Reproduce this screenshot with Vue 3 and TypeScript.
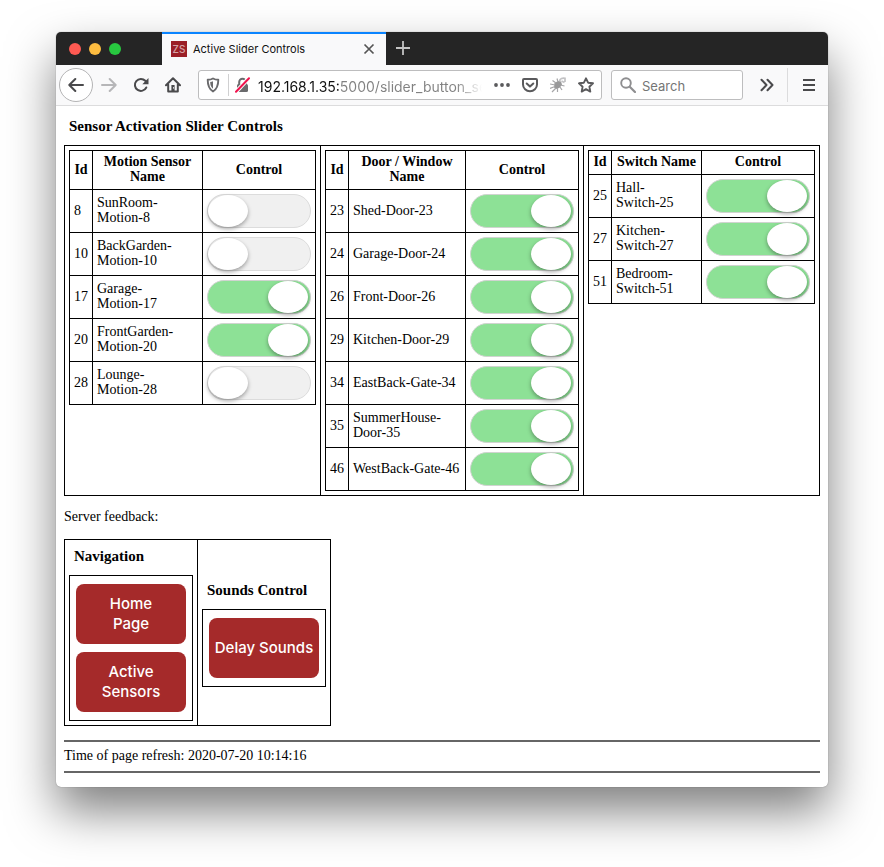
<script setup lang="ts">
import { reactive, ref } from 'vue'

interface Device {
  id: number
  place: string
  kind: string
  on: boolean
}

interface Group {
  key: string
  heading: string
  devices: Device[]
}

const device = (id: number, place: string, kind: string, on: boolean): Device => ({ id, place, kind, on })

const groups = reactive<Group[]>([
  {
    key: 'motion',
    heading: 'Motion Sensor Name',
    devices: [
      device(8, 'SunRoom', 'Motion', false),
      device(10, 'BackGarden', 'Motion', false),
      device(17, 'Garage', 'Motion', true),
      device(20, 'FrontGarden', 'Motion', true),
      device(28, 'Lounge', 'Motion', false),
    ],
  },
  {
    key: 'door',
    heading: 'Door / Window Name',
    devices: [
      device(23, 'Shed', 'Door', true),
      device(24, 'Garage', 'Door', true),
      device(26, 'Front', 'Door', true),
      device(29, 'Kitchen', 'Door', true),
      device(34, 'EastBack', 'Gate', true),
      device(35, 'SummerHouse', 'Door', true),
      device(46, 'WestBack', 'Gate', true),
    ],
  },
  {
    key: 'switch',
    heading: 'Switch Name',
    devices: [
      device(25, 'Hall', 'Switch', true),
      device(27, 'Kitchen', 'Switch', true),
      device(51, 'Bedroom', 'Switch', true),
    ],
  },
])

const address = ref('192.168.1.35:5000/slider_button_sen')
const search = ref('')
const refreshed = '2020-07-20 10:14:16'
</script>

<template>
  <div class="desktop">
    <div class="window">
      <header class="titlebar">
        <div class="lights">
          <button class="light close" aria-label="Close window"></button>
          <button class="light minimise" aria-label="Minimise window"></button>
          <button class="light zoom" aria-label="Zoom window"></button>
        </div>
        <div class="tab">
          <span class="favicon">ZS</span>
          <span class="tab-title">Active Slider Controls</span>
          <button class="icon-button tab-close" aria-label="Close tab">
            <svg width="12" height="12" viewBox="0 0 12 12"><path d="M1.5 1.5l9 9M10.500 1.500l-9 9" fill="none" stroke="#555" stroke-width="1.700" /></svg>
          </button>
        </div>
        <button class="icon-button new-tab" aria-label="New tab">
          <svg width="14" height="14" viewBox="0 0 14 14"><path d="M7 0v14M0 7h14" fill="none" stroke="#c4c4c4" stroke-width="1.8" /></svg>
        </button>
      </header>

      <nav class="toolbar" aria-label="Browser">
        <button class="icon-button back" aria-label="Back">
          <svg width="16" height="16" viewBox="0 0 16 16"><path d="M15 8H1.500M7.300 2L1.300 8l6 6" fill="none" stroke="#4a4a4c" stroke-width="2" stroke-linecap="round" stroke-linejoin="round" /></svg>
        </button>
        <button class="icon-button tool" aria-label="Forward">
          <svg width="16" height="16" viewBox="0 0 16 16"><path d="M1 8h13.500M8.700 2l6 6-6 6" fill="none" stroke="#b6b6b8" stroke-width="2" stroke-linecap="round" stroke-linejoin="round" /></svg>
        </button>
        <button class="icon-button tool" aria-label="Reload">
          <svg width="16" height="16" viewBox="0 0 16 16"><path d="M13.300 10.500a6 6 0 1 1-1-6.700l1.500 1.500" fill="none" stroke="#4a4a4c" stroke-width="2" stroke-linecap="round" /><path d="M15.500 1v6.200H9.300z" fill="#4a4a4c" /></svg>
        </button>
        <button class="icon-button tool" aria-label="Home">
          <svg width="16" height="16" viewBox="0 0 16 16"><path d="M1 8.300L8 1.300l7 7M3.200 7.500V14.500h9.600V7.500" fill="none" stroke="#4a4a4c" stroke-width="2" stroke-linecap="round" stroke-linejoin="round" /><path d="M6.400 8h3.200v6.500H6.400z" fill="#4a4a4c" /><path d="M8 10.300h1v1.200H8z" fill="#fff" /></svg>
        </button>

        <div class="field url">
          <svg class="shield" width="14" height="16" viewBox="0 0 14 16"><path d="M7 1.500c1.700 1 3.600 1.300 5.300 1.300 0 5.600-1 9.200-5.300 11.700C2.700 12 1.700 8.400 1.700 2.800 3.400 2.800 5.300 2.500 7 1.500z" fill="none" stroke="#6a6a6c" stroke-width="1.900" stroke-linejoin="round" /><path d="M7 4.200v7.500C4.800 9.900 4.300 8 4.200 5 5.200 4.900 6.200 4.600 7 4.200z" fill="#6a6a6c" /></svg>
          <span class="divider"></span>
          <svg class="lock" width="15" height="16" viewBox="0 0 15 16"><path d="M4.200 8V5a3.300 3.300 0 0 1 6.600 0v3" fill="none" stroke="#6a6a6c" stroke-width="2" /><rect x="2" y="7" width="11" height="8" rx="1.500" fill="#6a6a6c" /><path d="M.8 15.200L14 1" stroke="#fff" stroke-width="4" /><path d="M1 14.800L14 1.300" stroke="#f0134d" stroke-width="2" stroke-linecap="round" /></svg>
          <input v-model="address" class="address" type="text" aria-label="Address" spellcheck="false" />
          <button class="icon-button" aria-label="Page actions">
            <svg width="16" height="16" viewBox="0 0 16 16"><g fill="#5a5a5c"><circle cx="2" cy="8" r="1.900" /><circle cx="8" cy="8" r="1.900" /><circle cx="14" cy="8" r="1.900" /></g></svg>
          </button>
          <button class="icon-button" aria-label="Save to Pocket">
            <svg width="16" height="16" viewBox="0 0 16 16"><path d="M2 2h12a1 1 0 0 1 1 1v4.500a7 6.700 0 0 1-14 0V3a1 1 0 0 1 1-1z" fill="none" stroke="#5a5a5c" stroke-width="2" /><path d="M4.700 6.500L8 9.600l3.300-3.100" fill="none" stroke="#5a5a5c" stroke-width="2" stroke-linecap="round" stroke-linejoin="round" /></svg>
          </button>
          <button class="icon-button" aria-label="Extension">
            <svg width="16" height="16" viewBox="0 0 16 16"><path d="M4.500 6l3.500-2 3 .5 1 3-2 3-3.500 1.500-2.500-1.500z" fill="#989899" /><path d="M0 7l5 1M2.500 3.500L6 6M7 1.500L8 5M0 11.500l5-2M2 15l4-4M7.500 15l0-4M12 13l-2-3M14.500 9l-4-1" fill="none" stroke="#a6a6a8" stroke-width="1.200" /><path d="M9.500 4C10 1.500 12.500.8 15 1.300V5M11.500 4l3 1.500" fill="none" stroke="#c2c2c4" stroke-width="1.700" /></svg>
          </button>
          <button class="icon-button" aria-label="Bookmark this page">
            <svg width="16" height="16" viewBox="0 0 16 16"><path d="M8 1.300l2.100 4.400 4.900.6-3.600 3.400.9 4.900L8 12.200l-4.300 2.400.9-4.900L1 6.300l4.900-.6z" fill="none" stroke="#5a5a5c" stroke-width="1.900" stroke-linejoin="round" /></svg>
          </button>
        </div>

        <div class="field find">
          <svg width="16" height="16" viewBox="0 0 16 16"><circle cx="6" cy="6" r="4.800" fill="none" stroke="#8e8e90" stroke-width="1.900" /><path d="M9.700 9.700l5.300 5.300" stroke="#8e8e90" stroke-width="2.200" stroke-linecap="round" /></svg>
          <input v-model="search" class="query" type="text" placeholder="Search" aria-label="Search" />
        </div>

        <button class="icon-button more" aria-label="More tools">
          <svg width="14" height="14" viewBox="0 0 14 14"><path d="M1.500 1.800L6.500 7l-5 5.200M7.500 1.800l5 5.200-5 5.200" fill="none" stroke="#4a4a4c" stroke-width="2" stroke-linecap="round" stroke-linejoin="round" /></svg>
        </button>
        <button class="icon-button menu" aria-label="Menu">
          <svg width="12" height="14" viewBox="0 0 12 14"><path d="M0 2h12M0 7h12M0 12h12" stroke="#4a4a4c" stroke-width="2" /></svg>
        </button>
      </nav>

      <main class="page">
        <h1 class="heading">Sensor Activation Slider Controls</h1>

        <div class="groups">
          <section v-for="group in groups" :key="group.key" class="group">
            <table class="devices">
              <colgroup>
                <col class="col-id" />
                <col />
                <col class="col-control" />
              </colgroup>
              <thead>
                <tr>
                  <th>Id</th>
                  <th>{{ group.heading }}</th>
                  <th>Control</th>
                </tr>
              </thead>
              <tbody>
                <tr v-for="item in group.devices" :key="item.id">
                  <td>{{ item.id }}</td>
                  <td>
                    <label :for="`device-${item.id}`">{{ item.place }}-<wbr /><span class="kind">{{ item.kind }}-{{ item.id }}</span></label>
                  </td>
                  <td class="control"><input :id="`device-${item.id}`" v-model="item.on" class="switch" type="checkbox" /></td>
                </tr>
              </tbody>
            </table>
          </section>
        </div>

        <p class="feedback">Server feedback:</p>

        <div class="actions">
          <section class="action-cell">
            <h2 class="heading">Navigation</h2>
            <div class="button-box">
              <button class="action">Home<br />Page</button>
              <button class="action">Active<br />Sensors</button>
            </div>
          </section>
          <section class="action-cell">
            <h2 class="heading">Sounds Control</h2>
            <div class="button-box">
              <button class="action">Delay Sounds</button>
            </div>
          </section>
        </div>

        <footer class="refresh">Time of page refresh: {{ refreshed }}</footer>
      </main>
    </div>
  </div>
</template>

<style>
body {
  margin: 0;
  background: #fff;
}
</style>

<style scoped>
* {
  box-sizing: border-box;
}

.desktop {
  padding: 32px 56px 80px;
  overflow: hidden;
}

.window {
  border-radius: 5px;
  background: #fff;
  box-shadow: 0 0 1px rgba(0, 0, 0, 0.5), 0 24px 48px rgba(0, 0, 0, 0.5);
}

button {
  padding: 0;
  border: 0;
  background: none;
}

svg {
  display: block;
  flex: none;
}

.icon-button {
  display: flex;
  flex: none;
  align-items: center;
  justify-content: center;
}

.titlebar {
  display: flex;
  height: 33px;
  border-radius: 5px 5px 0 0;
  background: #252525;
  overflow: hidden;
}

.lights {
  display: flex;
  flex: none;
  align-items: center;
  gap: 8px;
  width: 106px;
  padding: 1px 0 0 13px;
}

.light {
  width: 12px;
  height: 12px;
  border-radius: 50%;
}

.close {
  background: #ff5a52;
}

.minimise {
  background: #fdbc40;
}

.zoom {
  background: #28c840;
}

.tab {
  display: flex;
  align-items: center;
  gap: 6px;
  width: 224px;
  padding: 0 11px 1px 9px;
  border-top: 2px solid #0a84ff;
  background: #f9f9fa;
  font: 11px Inter, sans-serif;
  color: #111;
}

.favicon {
  width: 16px;
  height: 16px;
  background: #9b1f27;
  color: #d6a3a6;
  font-size: 10px;
  font-weight: 500;
  line-height: 16px;
  text-align: center;
}

.tab-title {
  flex: 1;
  white-space: nowrap;
}

.new-tab {
  width: 34px;
  padding-bottom: 1px;
}

.toolbar {
  display: flex;
  align-items: center;
  height: 41px;
  padding: 0 3px;
  border-bottom: 1px solid #dcdcdd;
  background: #f9f9fa;
}

.back {
  width: 34px;
  height: 34px;
  border: 1px solid #b4b4b5;
  border-radius: 50%;
  background: #fff;
}

.tool {
  width: 32px;
  height: 32px;
}

.field {
  display: flex;
  align-items: center;
  height: 30px;
  border: 1px solid #bdbdbe;
  border-radius: 3px;
  background: #fff;
}

.url {
  flex: 1;
  gap: 12px;
  min-width: 0;
  margin-left: 9px;
  padding: 0 7px;
}

.divider {
  width: 1px;
  height: 22px;
  margin-left: -4px;
  background: #d0d0d1;
}

.lock {
  margin-left: -6px;
}

input {
  margin: 0;
}

.address,
.query {
  flex: 1;
  min-width: 0;
  padding: 2px 0 0;
  border: 0;
  outline: 0;
  background: none;
  font: 13px Inter, sans-serif;
}

.address {
  margin-left: -4px;
  background: linear-gradient(to right, #111 81px, #818181 81px);
  background-clip: text;
  -webkit-background-clip: text;
  color: transparent;
  caret-color: #111;
  font-size: 14px;
  -webkit-mask-image: linear-gradient(to left, transparent, #000 26px);
  mask-image: linear-gradient(to left, transparent, #000 26px);
}

.find {
  flex: none;
  gap: 6px;
  width: 132px;
  margin-left: 9px;
  padding: 0 8px;
}

.query::placeholder {
  color: #757575;
  opacity: 1;
}

.more {
  width: 40px;
  height: 32px;
  margin-left: 4px;
}

.menu {
  width: 38px;
  height: 34px;
  padding-left: 5px;
  border-left: 1px solid #dcdcdd;
}

.page {
  padding: 8px 8px 14px;
  font: 14px/15px "Liberation Serif", serif;
  color: #000;
}

.heading {
  margin: 0 5px;
  font-size: 15px;
  line-height: 24px;
}

.groups {
  display: grid;
  grid-template-columns: 255fr 263fr 236fr;
  margin-top: 7px;
  border: 1px solid #000;
}

.group {
  padding: 4px;
}

.group + .group {
  border-left: 1px solid #000;
}

.devices {
  width: 100%;
  table-layout: fixed;
  border-collapse: collapse;
}

.col-id {
  width: 23px;
}

.col-control {
  width: 113px;
}

th,
td {
  padding: 3px 4px 5px;
  border: 1px solid #000;
  text-align: left;
}

th {
  text-align: center;
}

.control {
  padding: 4px;
}

.kind {
  white-space: nowrap;
}

.switch {
  display: block;
  width: 104px;
  height: 34px;
  border: 1px solid #dcdcdc;
  border-radius: 17px;
  background: #f0f0f0;
  appearance: none;
}

.switch::before {
  content: "";
  display: block;
  width: 40px;
  height: 32px;
  border-radius: 50%;
  background: #fff;
  box-shadow: 0 2px 4px rgba(0, 0, 0, 0.35);
}

.switch:checked {
  border-color: #d0d4d0;
  background: #8de196;
}

.switch:checked::before {
  margin-left: 60px;
}

.feedback {
  margin: 13px 0 15px;
}

.actions {
  display: inline-grid;
  grid-template-columns: auto auto;
  border: 1px solid #000;
  vertical-align: top;
}

.action-cell {
  display: flex;
  flex-direction: column;
  justify-content: center;
  gap: 7px;
  padding: 4px;
}

.action-cell + .action-cell {
  border-left: 1px solid #000;
}

.button-box {
  display: flex;
  flex-direction: column;
  gap: 8px;
  padding: 8px 6px;
  border: 1px solid #000;
}

.action {
  width: 110px;
  height: 60px;
  border-radius: 8px;
  background: #a52a2a;
  color: #fff;
  font: 500 15px/20px Inter, sans-serif;
}

.refresh {
  margin-top: 14px;
  padding: 6px 0 8px;
  border: solid #666;
  border-width: 2px 0;
}
</style>
